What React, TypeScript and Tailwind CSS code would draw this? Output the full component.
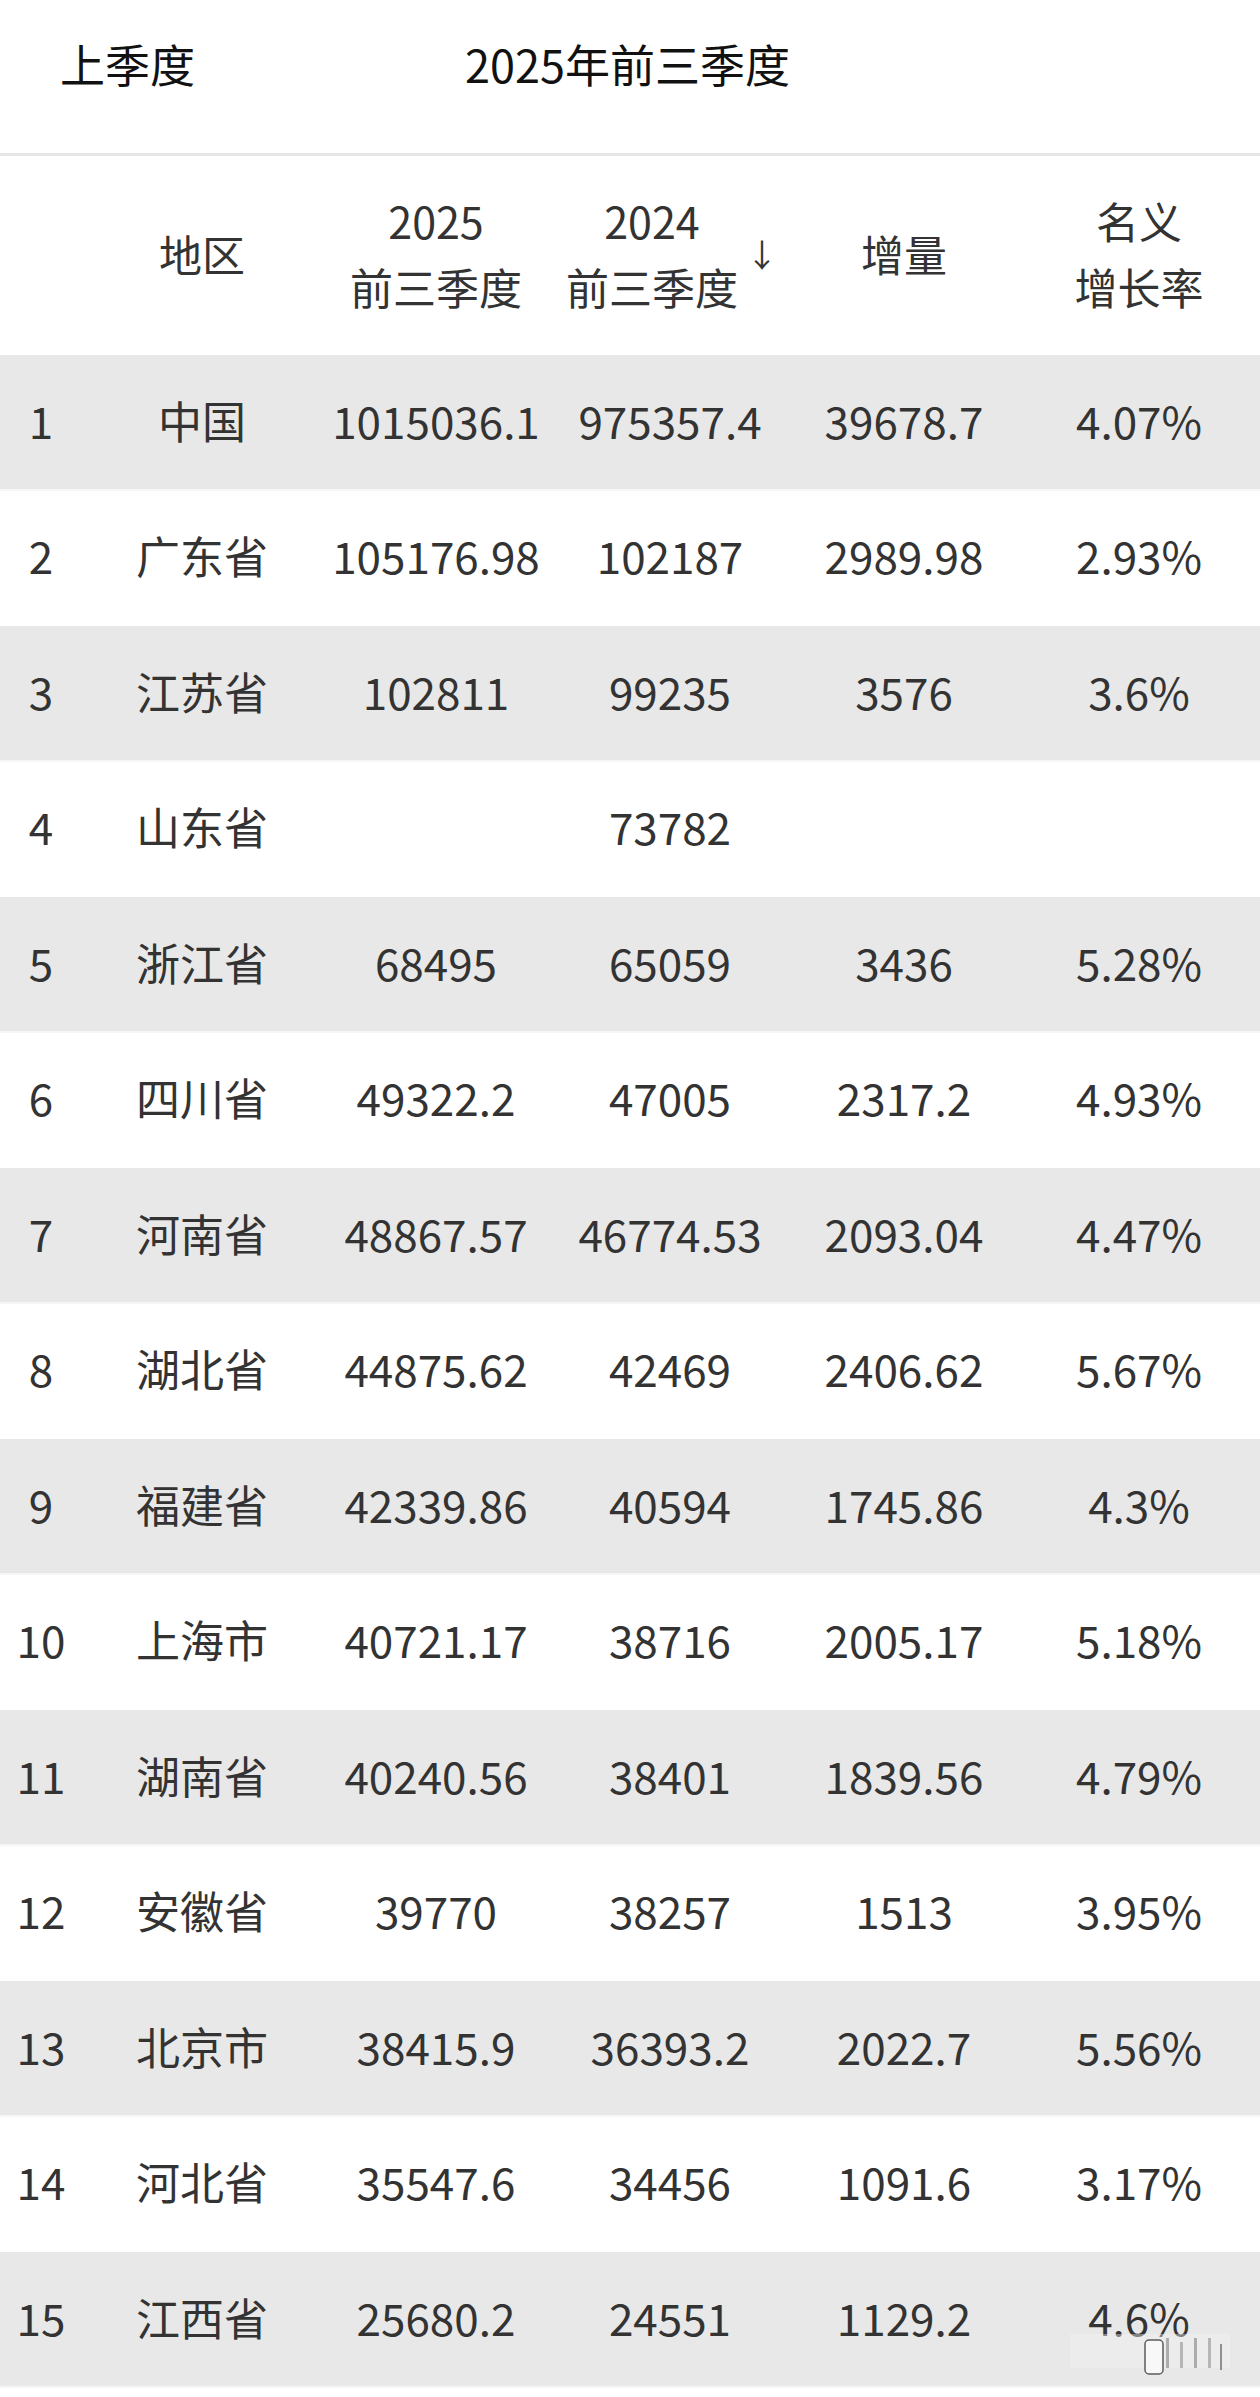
import React from 'react';

// GDP ranking table: 2025 first three quarters vs 2024
type Row = {
  rank: number;
  region: string;
  y2025: string;
  y2024: string;
  delta: string;
  rate: string;
};

const ROWS: Row[] = [
  { rank: 1, region: '中国', y2025: '1015036.1', y2024: '975357.4', delta: '39678.7', rate: '4.07%' },
  { rank: 2, region: '广东省', y2025: '105176.98', y2024: '102187', delta: '2989.98', rate: '2.93%' },
  { rank: 3, region: '江苏省', y2025: '102811', y2024: '99235', delta: '3576', rate: '3.6%' },
  { rank: 4, region: '山东省', y2025: '', y2024: '73782', delta: '', rate: '' },
  { rank: 5, region: '浙江省', y2025: '68495', y2024: '65059', delta: '3436', rate: '5.28%' },
  { rank: 6, region: '四川省', y2025: '49322.2', y2024: '47005', delta: '2317.2', rate: '4.93%' },
  { rank: 7, region: '河南省', y2025: '48867.57', y2024: '46774.53', delta: '2093.04', rate: '4.47%' },
  { rank: 8, region: '湖北省', y2025: '44875.62', y2024: '42469', delta: '2406.62', rate: '5.67%' },
  { rank: 9, region: '福建省', y2025: '42339.86', y2024: '40594', delta: '1745.86', rate: '4.3%' },
  { rank: 10, region: '上海市', y2025: '40721.17', y2024: '38716', delta: '2005.17', rate: '5.18%' },
  { rank: 11, region: '湖南省', y2025: '40240.56', y2024: '38401', delta: '1839.56', rate: '4.79%' },
  { rank: 12, region: '安徽省', y2025: '39770', y2024: '38257', delta: '1513', rate: '3.95%' },
  { rank: 13, region: '北京市', y2025: '38415.9', y2024: '36393.2', delta: '2022.7', rate: '5.56%' },
  { rank: 14, region: '河北省', y2025: '35547.6', y2024: '34456', delta: '1091.6', rate: '3.17%' },
  { rank: 15, region: '江西省', y2025: '25680.2', y2024: '24551', delta: '1129.2', rate: '4.6%' },
];

const GRID = 'grid grid-cols-[82px_240px_228px_240px_228px_242px]';

function Watermark() {
  return (
    <div className="pointer-events-none absolute right-[30px] bottom-[10px] opacity-70">
      <svg width="160" height="44" viewBox="0 0 160 44">
        <rect x="0" y="0" width="160" height="34" fill="#f4f4f4" opacity="0.6" />
        <rect x="75" y="6" width="18" height="34" rx="4" fill="#ffffff" stroke="#222" strokeWidth="1.5" />
        <rect x="96" y="4" width="3" height="30" fill="#555" opacity="0.6" />
        <rect x="110" y="8" width="3" height="26" fill="#555" opacity="0.5" />
        <rect x="124" y="4" width="3" height="30" fill="#555" opacity="0.6" />
        <rect x="138" y="4" width="3" height="30" fill="#555" opacity="0.5" />
        <rect x="150" y="10" width="2" height="26" fill="#333" opacity="0.7" />
      </svg>
    </div>
  );
}

export default function App() {
  return (
    <div
      className="w-[1260px] h-[2397px] bg-white text-[#333] overflow-hidden"
      style={{ fontFamily: '"Noto Sans CJK SC", "Noto Sans", sans-serif' }}
    >
      {/* Tabs */}
      <div className="h-[153px] flex items-center text-[45px] text-[#111] pb-[26px]">
        <span className="ml-[60px]">上季度</span>
        <span className="ml-[270px]">2025年前三季度</span>
      </div>
      <div className="h-[3px] bg-[#e6e6e6]" />

      {/* Header */}
      <div className={`${GRID} h-[199px] items-center text-[43px] leading-[66px] pb-[6px]`}>
        <div />
        <div className="text-center">地区</div>
        <div className="text-center">
          2025
          <br />
          前三季度
        </div>
        <div className="flex items-center justify-center gap-[8px] pl-[4px]">
          <div className="text-center">
            2024
            <br />
            前三季度
          </div>
          <span className="text-[32px] leading-none">↓</span>
        </div>
        <div className="text-center">增量</div>
        <div className="text-center">
          名义
          <br />
          增长率
        </div>
      </div>

      {/* Rows */}
      <div className="relative">
        {ROWS.map((r, i) => (
          <div
            key={r.rank}
            className={`${GRID} h-[135.5px] items-center text-[44px] pb-[4px] border-b-[2px] ${
              i % 2 === 0 ? 'bg-[#e8e8e8] border-[#f6f6f6]' : 'bg-white border-white'
            }`}
          >
            <div className="text-center">{r.rank}</div>
            <div className="text-center">{r.region}</div>
            <div className="text-center">{r.y2025}</div>
            <div className="text-center">{r.y2024}</div>
            <div className="text-center">{r.delta}</div>
            <div className="text-center">{r.rate}</div>
          </div>
        ))}
        <Watermark />
      </div>
    </div>
  );
}
